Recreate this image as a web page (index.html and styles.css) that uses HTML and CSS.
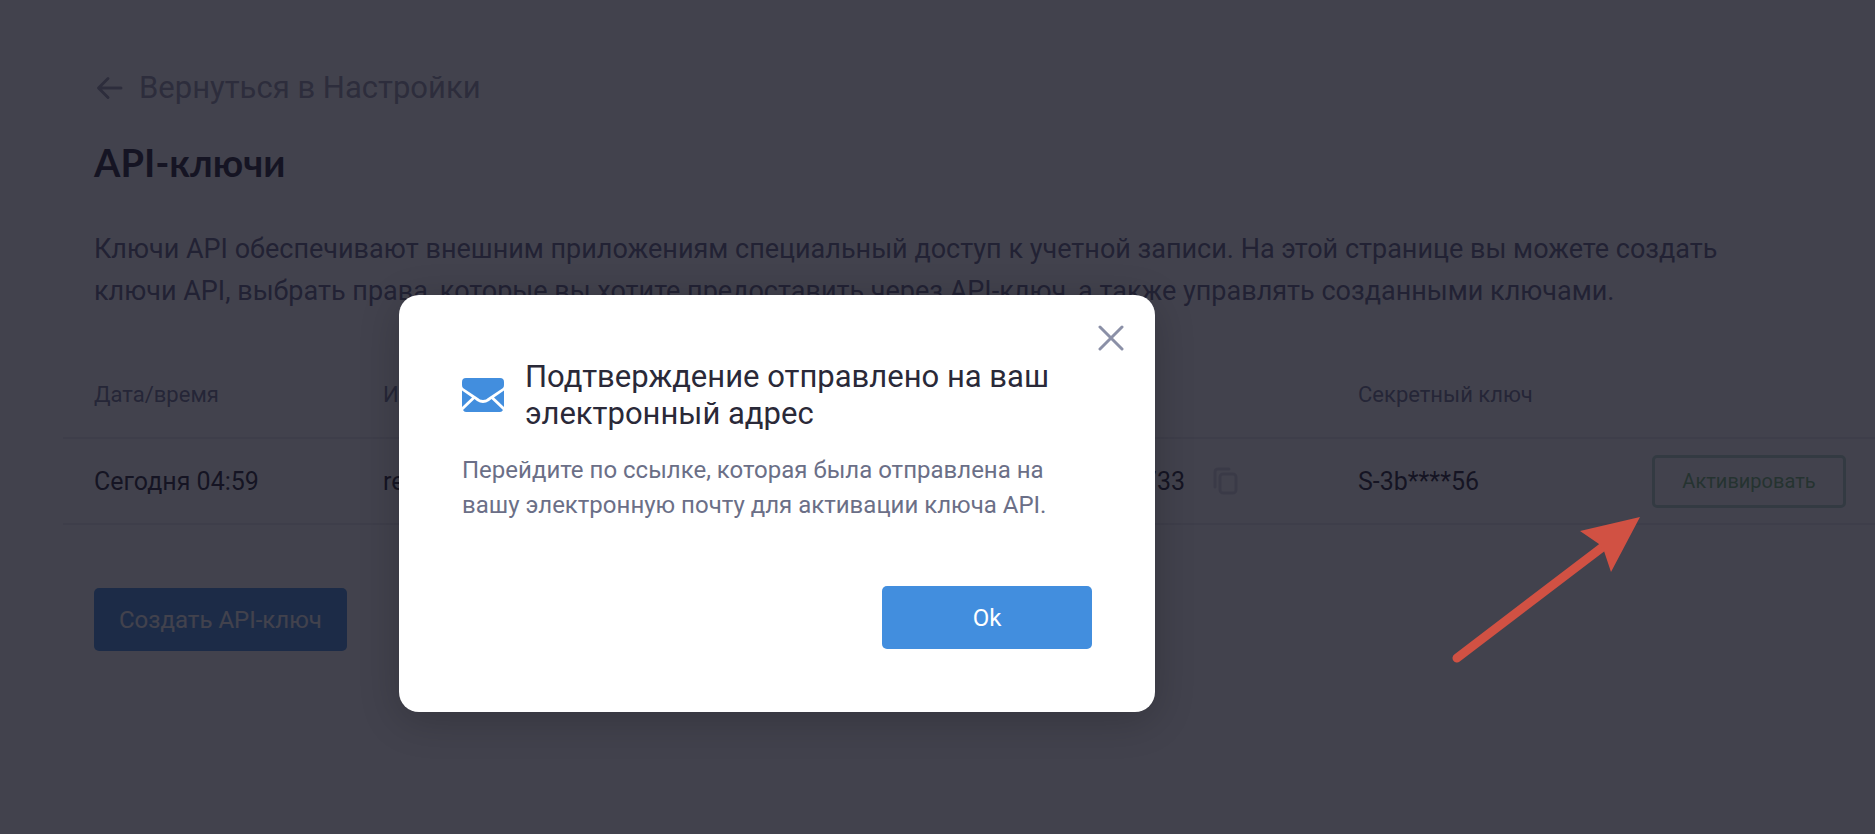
FILE: index.html
```html
<!DOCTYPE html>
<html lang="ru">
<head>
  <meta charset="UTF-8" />
  <meta name="viewport" content="width=device-width, initial-scale=1.0"/>
  <title>API-ключи</title>
  <link rel="stylesheet" href="styles.css">
</head>
<body>
  <main class="page">
    <a class="back" href="#">
      <svg width="27" height="24" viewBox="0 0 27 24" fill="none" stroke="currentColor" stroke-width="3" stroke-linecap="round" stroke-linejoin="round">
        <path d="M25 12H3M12 2.500L2.500 12L12 21.500"/>
      </svg>
      <span>Вернуться в Настройки</span>
    </a>

    <h1>API-ключи</h1>

    <p class="description">Ключи API обеспечивают внешним приложениям специальный доступ к учетной записи. На этой странице вы можете создать ключи API, выбрать права, которые вы хотите предоставить через API-ключ, а также управлять созданными ключами.</p>

    <table class="keys">
      <thead>
        <tr>
          <th class="col-date">Дата/время</th>
          <th class="col-name">Имя</th>
          <th class="col-key">API-ключ</th>
          <th class="col-secret">Секретный ключ</th>
          <th class="col-action"></th>
        </tr>
      </thead>
      <tbody>
        <tr>
          <td>Сегодня 04:59</td>
          <td>read</td>
          <td>
            <div class="key-value">
              <span>K-733</span>
              <button class="copy" type="button" aria-label="Скопировать">
                <svg width="26" height="28" viewBox="0 0 26 28" fill="none" stroke="currentColor" stroke-width="3" stroke-linecap="round">
                  <rect x="7" y="7" width="16" height="19" rx="3"/>
                  <path d="M2 20V5Q2 2 5 2H16"/>
                </svg>
              </button>
            </div>
          </td>
          <td>S-3b****56</td>
          <td class="action"><button class="activate" type="button">Активировать</button></td>
        </tr>
      </tbody>
    </table>

    <button class="btn create" type="button">Создать API-ключ</button>
  </main>

  <div class="overlay">
    <div class="modal" role="dialog" aria-modal="true" aria-labelledby="modal-title">
      <button class="close" type="button" aria-label="Закрыть">
        <svg width="26" height="26" viewBox="0 0 26 26" fill="none" stroke="currentColor" stroke-width="3" stroke-linecap="round">
          <path d="M2 2L24 24M24 2L2 24"/>
        </svg>
      </button>
      <div class="modal-head">
        <svg class="mail" width="42" height="34" viewBox="0 0 42 34" fill="currentColor">
          <path d="M4 0H38Q42 0 42 4V7Q42 9 41 10L26 20Q24.500 22 21 22Q17.500 22 16 20L1 10Q0 9 0 7V4Q0 0 4 0Z"/>
          <path d="M0 12.500L10 19.500L0 29Z"/>
          <path d="M42 12.500L32 19.500L42 29Z"/>
          <path d="M12.500 21L15 23Q21 27 27 23L29.500 21L41 32Q40 34 38 34H4Q2 34 1 32Z"/>
        </svg>
        <h2 id="modal-title">Подтверждение отправлено на ваш электронный адрес</h2>
      </div>
      <p>Перейдите по ссылке, которая была отправлена на вашу электронную почту для активации ключа API.</p>
      <div class="modal-footer">
        <button class="btn ok" type="button">Ok</button>
      </div>
    </div>
  </div>

  <svg class="pointer" width="190" height="146" viewBox="0 0 190 146">
    <path d="M5 141L152 29" stroke="#d15143" stroke-width="9" stroke-linecap="round"/>
    <path d="M188 0L128 14L147 27L152 34L159 55Z" fill="#d15143"/>
  </svg>
</body>
</html>
```

FILE: styles.css
```css
* {
  box-sizing: border-box;
}
body {
  margin: 0;
  min-height: 100vh;
  background: #fff;
  color: #1e1d2d;
  font-family: Roboto, sans-serif;
  font-size: 25px;
}
button {
  font-family: inherit;
  border: none;
  background: none;
  cursor: pointer;
}
.page {
  padding: 68px 0 0 94px;
}
.back {
  display: flex;
  align-items: center;
  gap: 16px;
  padding-left: 2px;
  color: #9696aa;
  font-size: 31px;
  line-height: 40px;
  text-decoration: none;
}
h1 {
  margin: 30px 0 0;
  font-family: Lato, sans-serif;
  font-size: 38px;
  line-height: 48px;
}
.description {
  max-width: 1700px;
  margin: 42px 0 0;
  color: #5f6282;
  font-size: 27px;
  line-height: 42px;
}
.keys {
  width: calc(100% + 31px);
  margin: 40px 0 0 -31px;
  border-collapse: collapse;
  table-layout: fixed;
}
.keys th,
.keys td {
  height: 86px;
  padding: 0;
  border-bottom: 2px solid #eaeaee;
  text-align: left;
}
.keys th {
  color: #6f7291;
  font-size: 22px;
  font-weight: 400;
}
.keys th:first-child,
.keys td:first-child {
  padding-left: 31px;
}
.col-date {
  width: 320px;
}
.col-name {
  width: 670px;
}
.col-key {
  width: 305px;
}
.col-secret {
  width: 287px;
}
.key-value {
  display: flex;
  align-items: center;
  justify-content: flex-end;
  gap: 28px;
  padding-right: 119px;
}
.copy {
  display: flex;
  padding: 0;
  color: #d8d8e2;
}
.keys td.action {
  padding-right: 29px;
  text-align: right;
}
.activate {
  width: 194px;
  height: 53px;
  padding: 0;
  border: 3px solid #b4d8c8;
  border-radius: 5px;
  color: #6eb470;
  font-size: 20px;
}
.btn {
  height: 63px;
  border-radius: 5px;
  background: #428ede;
  color: #fff;
  font-size: 24px;
}
.create {
  margin-top: 63px;
  padding: 0 25px;
}
.overlay {
  position: absolute;
  inset: 0;
  padding: 295px 0 0 399px;
  background: rgba(19, 19, 32, 0.8);
}
.modal {
  position: relative;
  max-width: 756px;
  padding: 63px;
  border-radius: 20px;
  background: #fff;
  box-shadow: 0 8px 40px rgba(0, 0, 0, 0.2);
}
.close {
  position: absolute;
  top: 30px;
  right: 31px;
  display: flex;
  padding: 0;
  color: #8b90a7;
}
.modal-head {
  display: flex;
  align-items: center;
  gap: 21px;
}
.mail {
  flex: none;
  color: #428ede;
}
.modal h2 {
  margin: 0;
  color: #2a2938;
  font-size: 31px;
  font-weight: 400;
  line-height: 37px;
}
.modal p {
  margin: 21px 0 0;
  color: #6b6f87;
  font-size: 24px;
  line-height: 35px;
}
.modal-footer {
  display: flex;
  justify-content: flex-end;
  margin-top: 63px;
}
.ok {
  width: 210px;
}
.pointer {
  position: absolute;
  top: 517px;
  left: 1452px;
}
```
